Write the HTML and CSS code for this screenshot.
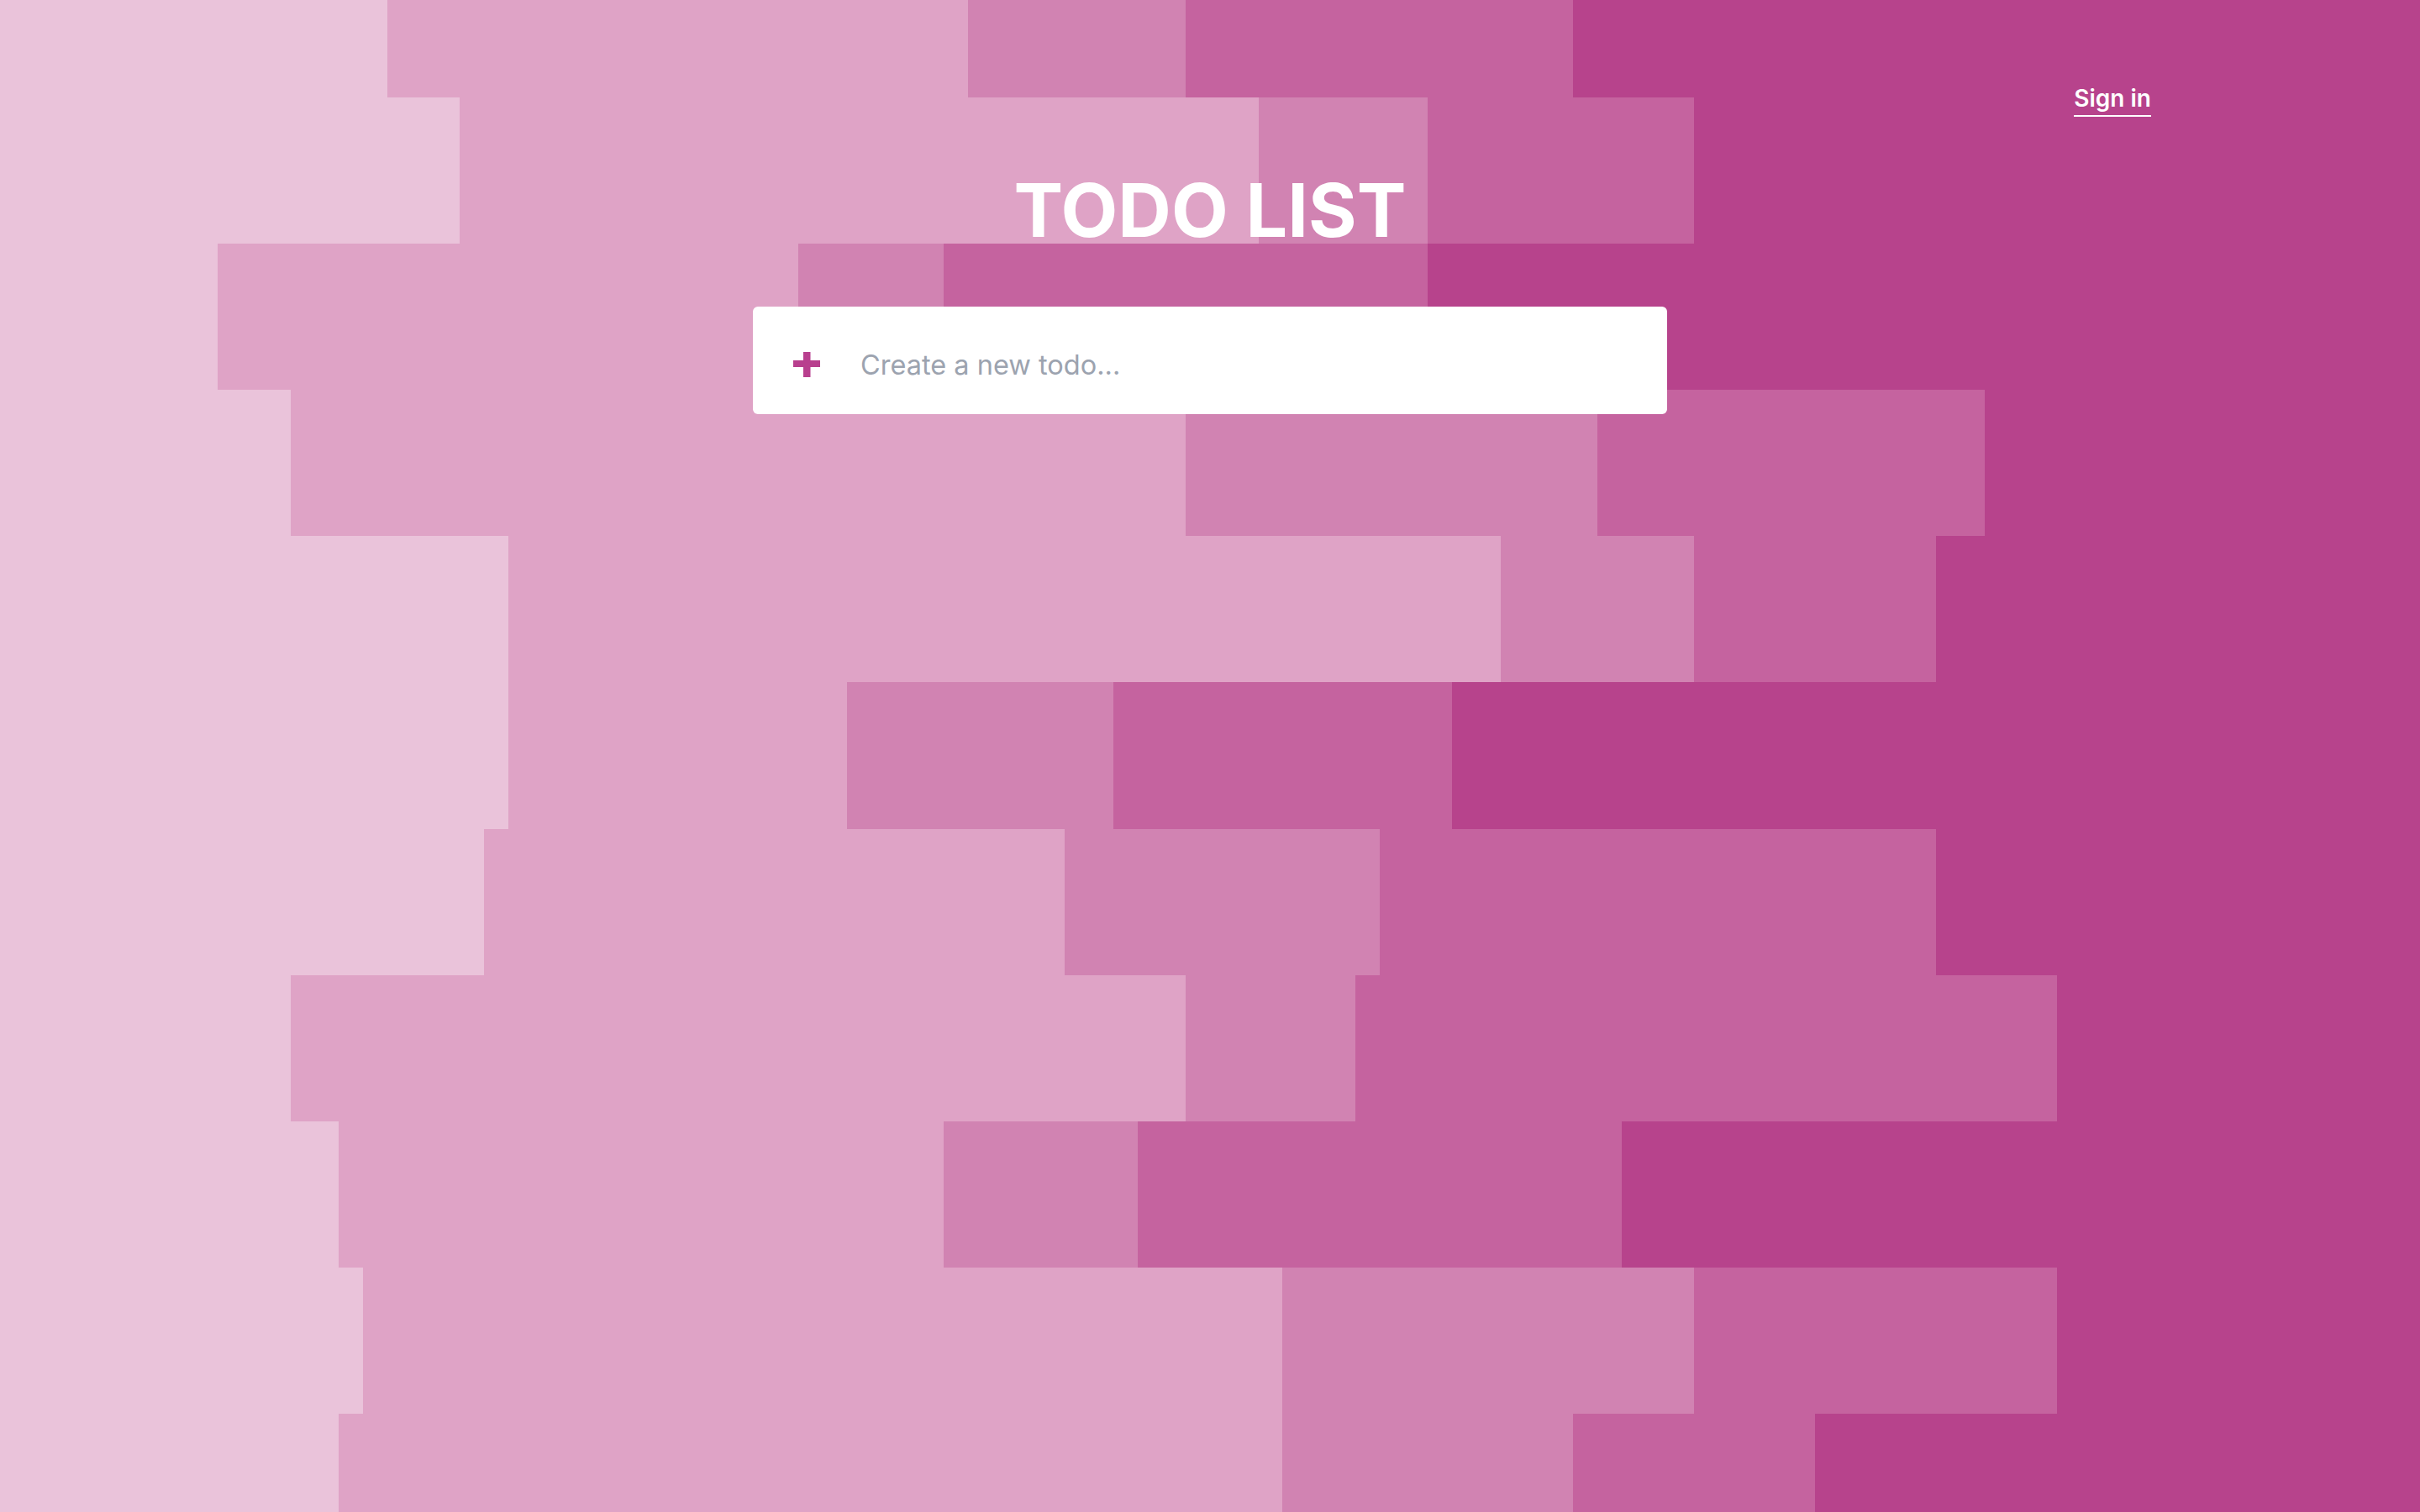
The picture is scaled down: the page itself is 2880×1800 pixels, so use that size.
FILE: index.html
```html
<!DOCTYPE html>
<html lang="en">
<head>
<meta charset="utf-8">
<title>Todo List</title>
<link rel="stylesheet" href="styles.css">
</head>
<body>
<div class="page">
  <div class="bg" aria-hidden="true">
    <div class="row r1"><span class="c1"></span><span class="c2"></span><span class="c3"></span><span class="c4"></span><span class="c5"></span></div>
    <div class="row r2"><span class="c1"></span><span class="c2"></span><span class="c3"></span><span class="c4"></span><span class="c5"></span></div>
    <div class="row r3"><span class="c1"></span><span class="c2"></span><span class="c3"></span><span class="c4"></span><span class="c5"></span></div>
    <div class="row r4"><span class="c1"></span><span class="c2"></span><span class="c3"></span><span class="c4"></span><span class="c5"></span></div>
    <div class="row r5"><span class="c1"></span><span class="c2"></span><span class="c3"></span><span class="c4"></span><span class="c5"></span></div>
    <div class="row r6"><span class="c1"></span><span class="c2"></span><span class="c3"></span><span class="c4"></span><span class="c5"></span></div>
    <div class="row r7"><span class="c1"></span><span class="c2"></span><span class="c3"></span><span class="c4"></span><span class="c5"></span></div>
    <div class="row r8"><span class="c1"></span><span class="c2"></span><span class="c3"></span><span class="c4"></span><span class="c5"></span></div>
    <div class="row r9"><span class="c1"></span><span class="c2"></span><span class="c3"></span><span class="c4"></span><span class="c5"></span></div>
    <div class="row r10"><span class="c1"></span><span class="c2"></span><span class="c3"></span><span class="c4"></span><span class="c5"></span></div>
    <div class="row r11"><span class="c1"></span><span class="c2"></span><span class="c3"></span><span class="c4"></span><span class="c5"></span></div>
  </div>
  <div class="content">
    <header class="topbar">
      <a class="signin" href="#">Sign in</a>
    </header>
    <h1 class="title">TODO LIST</h1>
    <form class="newtodo">
      <svg class="plus" width="32" height="30" viewBox="0 0 32 30" aria-hidden="true">
        <rect x="12" y="0" width="8.5" height="30" fill="#b83f8e"/>
        <rect x="0" y="10" width="32" height="8" fill="#b83f8e"/>
      </svg>
      <input class="newtodo-input" type="text" placeholder="Create a new todo...">
    </form>
  </div>
</div>
</body>
</html>
```
FILE: styles.css
```css
html, body {
  margin: 0;
  padding: 0;
}
body {
  font-family: "Inter", "Liberation Sans", sans-serif;
  overflow: hidden;
}
.page {
  display: grid;
  width: 100%;
  height: 100vh;
}
.bg, .content {
  grid-area: 1 / 1;
}
.bg {
  display: grid;
  grid-template-rows: 115.7px repeat(9, 174.2px) 1fr;
  height: 100vh;
}
.row {
  display: grid;
}
.c1 { background: #eac3da; }
.c2 { background: #dfa3c6; }
.c3 { background: #d183b2; }
.c4 { background: #c5639f; }
.c5 { background: #b7438c; }

.r1  { grid-template-columns: 16% 24% 9% 16% 1fr; }
.r2  { grid-template-columns: 19% 33% 7% 11% 1fr; }
.r3  { grid-template-columns: 9% 24% 6% 20% 1fr; }
.r4  { grid-template-columns: 12% 37% 17% 16% 1fr; }
.r5  { grid-template-columns: 21% 41% 8% 10% 1fr; }
.r6  { grid-template-columns: 21% 14% 11% 14% 1fr; }
.r7  { grid-template-columns: 20% 24% 13% 23% 1fr; }
.r8  { grid-template-columns: 12% 37% 7% 29% 1fr; }
.r9  { grid-template-columns: 14% 25% 8% 20% 1fr; }
.r10 { grid-template-columns: 15% 38% 17% 15% 1fr; }
.r11 { grid-template-columns: 14% 39% 12% 10% 1fr; }

.content {
  position: relative;
  z-index: 1;
  display: flex;
  flex-direction: column;
  align-items: center;
}
.topbar {
  align-self: stretch;
  display: flex;
  justify-content: flex-end;
  padding: 100px 320px 0 0;
}
.signin {
  font-size: 28px;
  font-weight: 600;
  line-height: 34px;
  color: #ffffff;
  text-decoration: none;
  padding-bottom: 3px;
  border-bottom: 2px solid #ffffff;
}
.title {
  margin: 67px 0 0 0;
  font-size: 88px;
  line-height: 88px;
  font-weight: 700;
  color: #ffffff;
  letter-spacing: 0;
}
.newtodo {
  margin-top: 71px;
  box-sizing: border-box;
  width: 1088px;
  height: 128px;
  padding: 10px 0 0 48px;
  background: #ffffff;
  border-radius: 6px;
  display: flex;
  align-items: center;
  gap: 48px;
}
.plus {
  flex: none;
  display: block;
}
.newtodo-input {
  flex: 1;
  border: 0;
  outline: none;
  background: transparent;
  font-family: "Inter", "Liberation Sans", sans-serif;
  font-size: 32.5px;
  color: #374151;
  padding: 0;
  margin: 0;
}
.newtodo-input::placeholder {
  color: #9ca3af;
  opacity: 1;
}
```
